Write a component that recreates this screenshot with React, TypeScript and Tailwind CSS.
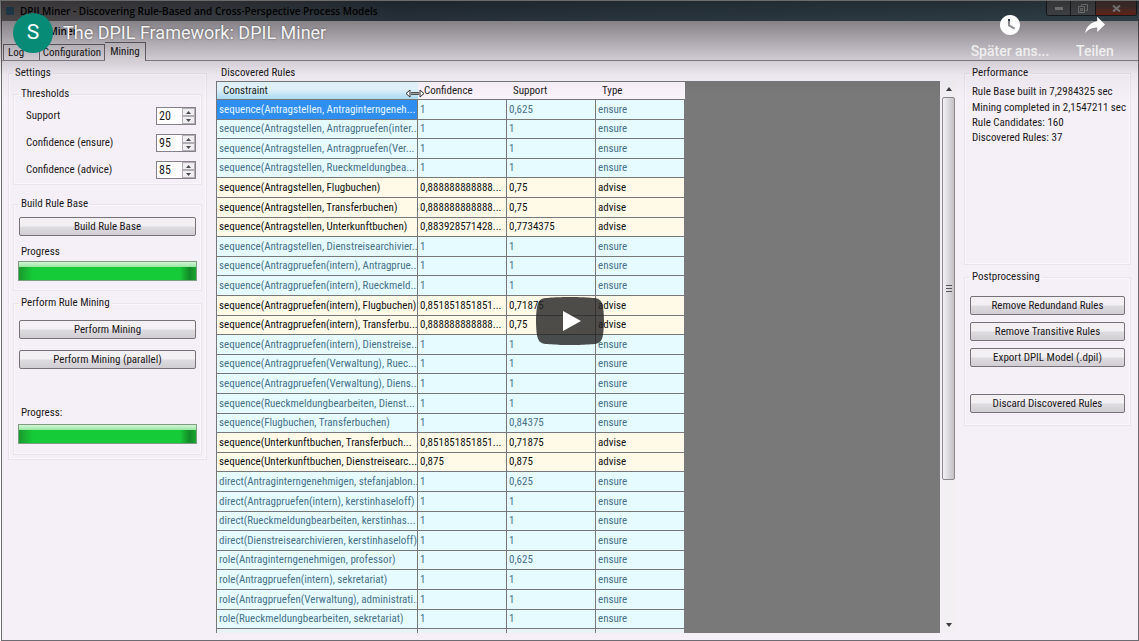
import { ReactNode } from 'react';
import clsx from 'clsx';

interface Rule {
  constraint: string;
  confidence: string;
  support: string;
  type: 'ensure' | 'advise';
}

const ensure = (constraint: string, support = '1'): Rule => ({ constraint, confidence: '1', support, type: 'ensure' });
const advise = (constraint: string, confidence: string, support: string): Rule => ({
  constraint,
  confidence,
  support,
  type: 'advise',
});

const rules: Rule[] = [
  ensure('sequence(Antragstellen, Antraginterngeneh...', '0,625'),
  ensure('sequence(Antragstellen, Antragpruefen(inter...'),
  ensure('sequence(Antragstellen, Antragpruefen(Ver...'),
  ensure('sequence(Antragstellen, Rueckmeldungbea...'),
  advise('sequence(Antragstellen, Flugbuchen)', '0,888888888888...', '0,75'),
  advise('sequence(Antragstellen, Transferbuchen)', '0,888888888888...', '0,75'),
  advise('sequence(Antragstellen, Unterkunftbuchen)', '0,883928571428...', '0,7734375'),
  ensure('sequence(Antragstellen, Dienstreisearchivier...'),
  ensure('sequence(Antragpruefen(intern), Antragprue...'),
  ensure('sequence(Antragpruefen(intern), Rueckmeld...'),
  advise('sequence(Antragpruefen(intern), Flugbuchen)', '0,851851851851...', '0,71875'),
  advise('sequence(Antragpruefen(intern), Transferbu...', '0,888888888888...', '0,75'),
  ensure('sequence(Antragpruefen(intern), Dienstreise...'),
  ensure('sequence(Antragpruefen(Verwaltung), Ruec...'),
  ensure('sequence(Antragpruefen(Verwaltung), Diens...'),
  ensure('sequence(Rueckmeldungbearbeiten, Dienst...'),
  ensure('sequence(Flugbuchen, Transferbuchen)', '0,84375'),
  advise('sequence(Unterkunftbuchen, Transferbuch...', '0,851851851851...', '0,71875'),
  advise('sequence(Unterkunftbuchen, Dienstreisearc...', '0,875', '0,875'),
  ensure('direct(Antraginterngenehmigen, stefanjablon...', '0,625'),
  ensure('direct(Antragpruefen(intern), kerstinhaseloff)'),
  ensure('direct(Rueckmeldungbearbeiten, kerstinhas...'),
  ensure('direct(Dienstreisearchivieren, kerstinhaseloff)'),
  ensure('role(Antraginterngenehmigen, professor)', '0,625'),
  ensure('role(Antragpruefen(intern), sekretariat)'),
  ensure('role(Antragpruefen(Verwaltung), administrati...'),
  ensure('role(Rueckmeldungbearbeiten, sekretariat)'),
];

const thresholds = [
  { id: 'support', label: 'Support', value: '20' },
  { id: 'confidence-ensure', label: 'Confidence (ensure)', value: '95' },
  { id: 'confidence-advice', label: 'Confidence (advice)', value: '85' },
];

function GroupBox({ title, className, children }: { title: string; className?: string; children?: ReactNode }) {
  return (
    <fieldset className={clsx('min-w-0 border border-[#e9e3ec] shadow-[inset_0_0_0_1px_#faf7fb]', className)}>
      <legend className="px-[2px] leading-[14px]">{title}</legend>
      {children}
    </fieldset>
  );
}

function WinButton({ className, children }: { className?: string; children: ReactNode }) {
  return (
    <button
      className={clsx(
        'block h-[19px] w-full rounded-[2px] border border-[#77727a] bg-linear-to-b from-[#f3f0f4] from-45% via-[#dedbe0] via-55% to-[#d0cdd3] leading-[17px]',
        className
      )}
    >
      {children}
    </button>
  );
}

function ProgressBar({ label, className }: { label: string; className?: string }) {
  return (
    <div
      role="progressbar"
      aria-label={label}
      aria-valuenow={100}
      className={clsx('-mx-px h-5 border border-[#7d9c80] bg-[#16cb38]', className)}
    >
      <div className="flex h-full flex-col">
        <div className="h-[5px] bg-linear-to-b from-[#d3f3d6] to-[#97e8a2]" />
        <div className="flex-1 bg-linear-to-r from-[#199a2f] via-[#16cb38] via-8% to-[#16cb38] to-90%">
          <div className="ml-auto h-full w-4 bg-linear-to-r from-[#16cb38] via-[#128a28] via-60% to-[#1aa532]" />
        </div>
      </div>
    </div>
  );
}

function Spinner({ id, label, value }: { id: string; label: string; value: string }) {
  return (
    <div className="flex h-[18px] items-center justify-between pl-[7px]">
      <label htmlFor={id}>{label}</label>
      <div className="flex h-full w-10 border border-[#85808a] bg-white">
        <input
          id={id}
          defaultValue={value}
          className="min-w-0 flex-1 bg-transparent pl-[2px] text-[12px] outline-none"
        />
        <div className="flex w-[13px] flex-col">
          {['up', 'down'].map((dir) => (
            <button
              key={dir}
              aria-label={`${label} ${dir}`}
              className="flex flex-1 items-center justify-center border border-[#b3aeb6] bg-[#f1eef2]"
            >
              <svg width="5" height="3" viewBox="0 0 5 3" fill="#4b4b50">
                <path d={dir === 'up' ? 'M0 3 2.5 0 5 3z' : 'M0 0h5L2.5 3z'} />
              </svg>
            </button>
          ))}
        </div>
      </div>
    </div>
  );
}

function SettingsPanel() {
  return (
    <GroupBox title="Settings" className="w-[199px] shrink-0 self-start px-1 pt-[7px] pb-1">
      <GroupBox title="Thresholds" className="px-[5px] pt-[6px] pb-[5px]">
        <div className="flex flex-col gap-[9px]">
          {thresholds.map((t) => (
            <Spinner key={t.id} {...t} />
          ))}
        </div>
      </GroupBox>
      <GroupBox title="Build Rule Base" className="mt-3 px-[5px] pt-[6px] pb-[9px]">
        <WinButton>Build Rule Base</WinButton>
        <p className="mt-[9px] px-[2px] leading-[14px]">Progress</p>
        <ProgressBar label="Rule base progress" className="mt-[2px]" />
      </GroupBox>
      <GroupBox title="Perform Rule Mining" className="mt-[5px] px-[5px] pt-[10px] pb-[10px]">
        <WinButton>Perform Mining</WinButton>
        <WinButton className="mt-[11px]">Perform Mining (parallel)</WinButton>
        <p className="mt-[37px] px-[2px] leading-[14px]">Progress:</p>
        <ProgressBar label="Mining progress" className="mt-1" />
      </GroupBox>
    </GroupBox>
  );
}

function RulesTable() {
  return (
    <table className="w-[469px] table-fixed border-separate border-spacing-0 self-start border-l border-[#77777c] text-left">
      <colgroup>
        <col className="w-[201px]" />
        <col className="w-[89px]" />
        <col className="w-[89px]" />
        <col className="w-[89px]" />
      </colgroup>
      <thead>
        <tr className="h-[18px] bg-[#fbf3fb] text-[#1b1b20] *:border-b *:border-[#77777c] *:py-0 *:pl-[6px] *:font-normal *:leading-[14px]">
          <th className="relative bg-linear-to-b from-[#e4f5fd] from-40% to-[#a9daf2]">
            Constraint
            {/* column resize cursor */}
            <svg className="absolute top-[6px] -right-[7px] z-10" width="20" height="11" viewBox="0 0 20 11">
              <path d="M6 4.5h8M6 6.5h8" stroke="#555" />
              <path d="M1 5.5 5 2v7zM19 5.5 15 2v7z" fill="#fff" stroke="#333" strokeLinejoin="round" />
              <path d="M6 5.5h8" stroke="#999" />
            </svg>
          </th>
          <th>Confidence</th>
          <th>Support</th>
          <th>Type</th>
        </tr>
      </thead>
      <tbody>
        {rules.map((rule, i) => (
          <tr
            key={rule.constraint}
            className={clsx(
              'h-5 *:overflow-hidden *:border-r *:border-b *:border-[#77777c] *:py-0 *:pl-[2px] *:leading-[14px] *:whitespace-nowrap nth-[5n+2]:h-[19px] nth-[5n+4]:h-[19px]',
              rule.type === 'ensure' ? 'bg-[#e6fbff] text-[#47728a]' : 'bg-[#fffae8] text-[#111]'
            )}
          >
            <td className={clsx(i === 0 && 'bg-[#2f8ff0] text-[#e6f5ff]')}>{rule.constraint}</td>
            <td>{rule.confidence}</td>
            <td>{rule.support}</td>
            <td>{rule.type}</td>
          </tr>
        ))}
        <tr className="h-5 bg-[#e9f3f7] *:border-r *:border-[#77777c]">
          <td />
          <td />
          <td />
          <td />
        </tr>
      </tbody>
    </table>
  );
}

function ScrollBar() {
  return (
    <div className="ml-[2px] flex w-[13px] shrink-0 flex-col items-center bg-[#f2f0f3]">
      <svg className="mt-[6px] mb-[6px] shrink-0" width="6" height="4" viewBox="0 0 6 4" fill="#3c3c40">
        <path d="M0 4 3 0l3 4z" />
      </svg>
      <div className="flex w-full flex-[382] flex-col items-center justify-center gap-[2px] rounded-[2px] border border-[#8b888e] bg-linear-to-r from-[#f3f1f4] to-[#c3c1c5]">
        <span className="h-px w-[6px] bg-[#55555a]" />
        <span className="h-px w-[6px] bg-[#55555a]" />
        <span className="h-px w-[6px] bg-[#55555a]" />
      </div>
      <div className="flex-[144]" />
      <svg className="mb-[6px] shrink-0" width="6" height="4" viewBox="0 0 6 4" fill="#3c3c40">
        <path d="M0 0h6L3 4z" />
      </svg>
    </div>
  );
}

function SidePanel() {
  return (
    <div className="w-[167px] shrink-0">
      <GroupBox title="Performance" className="h-[199px] px-[5px] pt-[4px]">
        <div className="px-[2px] leading-[15px] whitespace-nowrap">
          <p>Rule Base built in 7,2984325 sec</p>
          <p className="mt-px">Mining completed in 2,1547211 sec</p>
          <p>Rule Candidates: 160</p>
          <p>Discovered Rules: 37</p>
        </div>
      </GroupBox>
      <GroupBox title="Postprocessing" className="mt-[5px] px-[5px] pt-[12px] pb-[12px]">
        <WinButton>Remove Redundand Rules</WinButton>
        <WinButton className="mt-[7px]">Remove Transitive Rules</WinButton>
        <WinButton className="mt-[7px]">Export DPIL Model (.dpil)</WinButton>
        <WinButton className="mt-[27px]">Discard Discovered Rules</WinButton>
      </GroupBox>
    </div>
  );
}

function TitleBar() {
  return (
    <header className="flex h-5 items-start justify-between bg-linear-to-r from-[#8a8285] via-[#46596a] via-35% to-[#567280]">
      <div className="flex h-full items-center gap-[6px] pl-1">
        <span className="size-2 rounded-[1px] bg-[#3a6f8c]" />
        <h1 className="font-['Open_Sans',sans-serif] text-[10px] font-semibold whitespace-nowrap text-black">
          DPILMiner - Discovering Rule-Based and Cross-Perspective Process Models
        </h1>
      </div>
      <div className="mr-px flex h-[15px] overflow-hidden rounded-b-[3px] border border-t-0 border-[#2b3034]">
        <button aria-label="Minimize" className="flex w-6 items-center justify-center border-r border-[#2b3034] bg-[#777d80]">
          <span className="h-[3px] w-2 bg-[#e8e8e8]" />
        </button>
        <button aria-label="Restore" className="flex w-[25px] items-center justify-center border-r border-[#2b3034] bg-[#777d80]">
          <svg width="10" height="9" viewBox="0 0 10 9" fill="none" stroke="#ddd">
            <path d="M3.5 2.5v-2h6v6h-2" />
            <path d="M.5 2.5h6v6h-6zM2.5 4.5h2v2h-2z" />
          </svg>
        </button>
        <button aria-label="Close" className="flex w-10 items-center justify-center bg-linear-to-b from-[#7c5a54] from-40% to-[#c03c26]">
          <svg width="9" height="7" viewBox="0 0 9 7" stroke="#eee" strokeWidth="2">
            <path d="M1 .5l7 6M8 .5l-7 6" />
          </svg>
        </button>
      </div>
    </header>
  );
}

function PlayerOverlay() {
  return (
    <div className="absolute inset-0 font-[Roboto,sans-serif]">
      <div className="flex h-[100px] items-start justify-between bg-[linear-gradient(to_bottom,rgba(0,0,0,.58)_0,rgba(0,0,0,.45)_22px,rgba(0,0,0,.18)_56px,rgba(0,0,0,.04)_75px,transparent)]">
        <a href="#video" className="flex items-center gap-[10px] pt-[13px] pl-[13px]">
          <span className="flex size-10 items-center justify-center rounded-full bg-[#078a76] text-[21px] text-white">S</span>
          <span className="pb-[2px] text-[18px] whitespace-nowrap text-[#f4f4f4] [text-shadow:0_0_2px_rgba(0,0,0,.5)]">
            The DPIL Framework: DPIL Miner
          </span>
        </a>
        <div className="flex gap-[14px] pt-[7px] pr-[13px] text-[14px] font-medium text-[#eee] [text-shadow:0_0_2px_rgba(0,0,0,.5)]">
          <button className="flex w-20 flex-col items-center">
            <svg width="36" height="36" viewBox="0 0 36 36" fill="#fff">
              <path
                fillRule="evenodd"
                d="M18 8C12.47 8 8 12.47 8 18s4.47 10 10 10 10-4.48 10-10S23.52 8 18 8zM16 19.02V12h2v5.86l5.1 2.95-1 1.73z"
              />
            </svg>
            <span className="leading-4 whitespace-nowrap">Später ans...</span>
          </button>
          <button className="flex w-[62px] flex-col items-center">
            <svg width="36" height="36" viewBox="0 0 36 36" fill="#fff">
              <path d="M20.2 14.19V9.74l7.79 7.79-7.79 7.56v-4.56c-3.93.16-8.1 1.28-10.86 4.23-.54.37-1.74 2.53-1.22.89.96-4.33 3.68-8.47 7.86-10.27 1.32-.6 2.76-.98 4.22-1.19z" />
            </svg>
            <span className="leading-4">Teilen</span>
          </button>
        </div>
      </div>
      <button aria-label="Play" className="absolute top-1/2 left-1/2 -translate-x-1/2 -translate-y-1/2">
        <svg width="68" height="48" viewBox="0 0 68 48">
          <path
            d="M66.52 7.74c-.78-2.93-2.49-5.41-5.42-6.19C55.79.13 34 0 34 0S12.21.13 6.9 1.55C3.97 2.33 2.27 4.81 1.48 7.74.06 13.05 0 24 0 24s.06 10.95 1.48 16.26c.78 2.93 2.49 5.41 5.42 6.19C12.21 47.87 34 48 34 48s21.79-.13 27.1-1.55c2.93-.78 4.64-3.26 5.42-6.19C67.94 34.95 68 24 68 24s-.06-10.95-1.48-16.26z"
            fill="#212121"
            fillOpacity=".8"
          />
          <path d="M45 24 27 14v20z" fill="#fff" />
        </svg>
      </button>
    </div>
  );
}

export default function App() {
  return (
    <div className="relative flex h-screen flex-col overflow-hidden bg-white pt-px pl-px font-['Roboto_Condensed',Roboto,sans-serif] text-[11px] text-[#1c1a20]">
      <div className="flex min-h-0 flex-1 flex-col border-r border-b border-l border-[#6f6b72] bg-[#f5eff8]">
        <TitleBar />
        <div className="flex h-[21px] items-center pl-[22px] font-['Open_Sans',sans-serif] text-[10px] font-semibold text-black">
          <span>DPIL Miner</span>
        </div>
        <nav className="flex h-[19px] items-end border-b border-[#8e8a92] pl-px">
          <button className="h-4 w-[37px] border border-b-0 border-[#77727a] pl-1 text-left leading-[15px]">Log</button>
          <button className="h-4 w-[65px] border border-b-0 border-l-0 border-[#77727a] leading-[15px]">Configuration</button>
          <button className="-mb-px h-[19px] w-[41px] border border-b-0 border-l-0 border-[#77727a] bg-[#f7f2f9]">Mining</button>
        </nav>
        <main className="flex min-h-0 flex-1 gap-1 pt-[5px] pr-[7px] pb-[4px] pl-[6px]">
          <SettingsPanel />
          <div className="flex min-w-0 flex-1 flex-col pl-[5px]">
            <h2 className="pl-[5px] leading-[14px]">Discovered Rules</h2>
            <div className="mt-px mb-[3px] flex min-h-0 flex-1">
              <div className="flex min-w-0 flex-1 overflow-hidden border-t border-[#77777c] bg-[#797979]">
                <RulesTable />
              </div>
              <ScrollBar />
            </div>
          </div>
          <div className="pl-[5px]">
            <SidePanel />
          </div>
        </main>
      </div>
      <PlayerOverlay />
    </div>
  );
}
